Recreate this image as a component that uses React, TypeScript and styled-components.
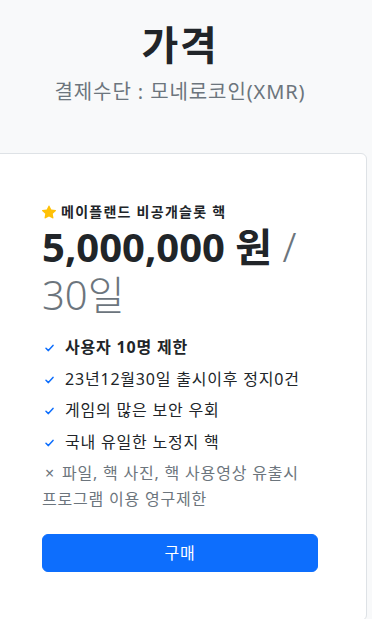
import React from "react";
import styled, { createGlobalStyle } from "styled-components";

const GlobalStyle = createGlobalStyle`
  html, body { margin: 0; padding: 0; }
  body {
    background: #f8f9fa;
    font-family: "Noto Sans", "Noto Sans CJK KR", sans-serif;
    color: #212529;
    overflow: hidden;
  }
  * { box-sizing: border-box; }
`;

const Page = styled.div`
  width: 372px;
  min-height: 619px;
  background: #f8f9fa;
`;

const Container = styled.main`
  margin-left: -7px;
  width: 374px;
`;

const Header = styled.header`
  padding: 21px 0 46px;
  text-align: center;
`;

const Title = styled.h1`
  margin: 0 0 8px;
  font-size: 40px;
  line-height: 48px;
  font-weight: 700;
  letter-spacing: 0.04em;
  color: #212529;
`;

const Lead = styled.p`
  margin: 0;
  font-size: 20px;
  line-height: 30px;
  font-weight: 400;
  letter-spacing: 0.045em;
  color: #6c757d;
`;

const Card = styled.section`
  background: #fff;
  border: 1px solid #dee2e6;
  border-radius: 6px;
  padding: 48px;
`;

const Tag = styled.div`
  display: flex;
  align-items: center;
  gap: 5px;
  font-size: 14px;
  line-height: 20px;
  font-weight: 700;
  letter-spacing: 0.09em;
  color: #212529;
`;

const Price = styled.h2`
  margin: 1px 0 15px;
  font-size: 40px;
  line-height: 48px;
  font-weight: 700;
  color: #212529;
`;

const Period = styled.small`
  font-size: 40px;
  font-weight: 300;
  color: #6c757d;
`;

const List = styled.ul`
  list-style: none;
  margin: 0 0 22px;
  padding: 0;
  display: flex;
  flex-direction: column;
  gap: 5.6px;
`;

const Item = styled.li<{ $muted?: boolean; $bold?: boolean }>`
  font-size: 16px;
  line-height: 26px;
  letter-spacing: 0.05em;
  font-weight: ${(p) => (p.$bold ? 700 : 400)};
  color: ${(p) => (p.$muted ? "#6c757d" : "#212529")};
`;

const CheckMark = styled.svg`
  display: inline-block;
  width: 9px;
  height: 8px;
  margin: 0 11px 0 3px;
  vertical-align: 1px;
`;

const Cross = styled.span`
  display: inline-block;
  margin: 0 7px 0 3px;
  color: #6c757d;
`;

const BuyButton = styled.button`
  display: block;
  width: 100%;
  height: 38px;
  border: 1px solid #0d6efd;
  border-radius: 6px;
  background: #0d6efd;
  color: #fff;
  font-family: "Noto Sans", "Noto Sans CJK KR", sans-serif;
  font-size: 16px;
  line-height: 24px;
  letter-spacing: 0.05em;
  cursor: pointer;
`;

const Check = () => (
  <CheckMark viewBox="0 0 9 8" aria-hidden>
    <path d="M1 4.3 L3.4 6.6 L8 1.4" fill="none" stroke="#0d6efd" strokeWidth="1.5" strokeLinecap="round" strokeLinejoin="round" />
  </CheckMark>
);

const Star = () => (
  <svg width="14" height="14" viewBox="0 0 16 16" aria-hidden>
    <path
      d="M3.612 15.443c-.386.198-.824-.149-.746-.592l.83-4.73L.173 6.765c-.329-.314-.158-.888.283-.95l4.898-.696L7.538.792c.197-.39.73-.39.927 0l2.184 4.327 4.898.696c.441.062.612.636.282.95l-3.522 3.356.83 4.73c.078.443-.36.79-.746.592L8 13.187l-4.389 2.256z"
      fill="#ffc107"
    />
  </svg>
);

const features = [
  { text: "사용자 10명 제한", bold: true },
  { text: "23년12월30일 출시이후 정지0건" },
  { text: "게임의 많은 보안 우회" },
  { text: "국내 유일한 노정지 핵" },
];

export default function App() {
  return (
    <Page>
      <GlobalStyle />
      <Container>
        <Header>
          <Title>가격</Title>
          <Lead>결제수단 : 모네로코인(XMR)</Lead>
        </Header>
        <Card>
          <Tag>
            <Star />
            메이플랜드 비공개슬롯 핵
          </Tag>
          <Price>
            5,000,000 원 <Period>/ 30일</Period>
          </Price>
          <List>
            {features.map((f) => (
              <Item key={f.text} $bold={f.bold}>
                <Check />
                {f.text}
              </Item>
            ))}
            <Item $muted>
              <Cross>×</Cross>
              파일, 핵 사진, 핵 사용영상 유출시 프로그램 이용 영구제한
            </Item>
          </List>
          <BuyButton>구매</BuyButton>
        </Card>
      </Container>
    </Page>
  );
}
